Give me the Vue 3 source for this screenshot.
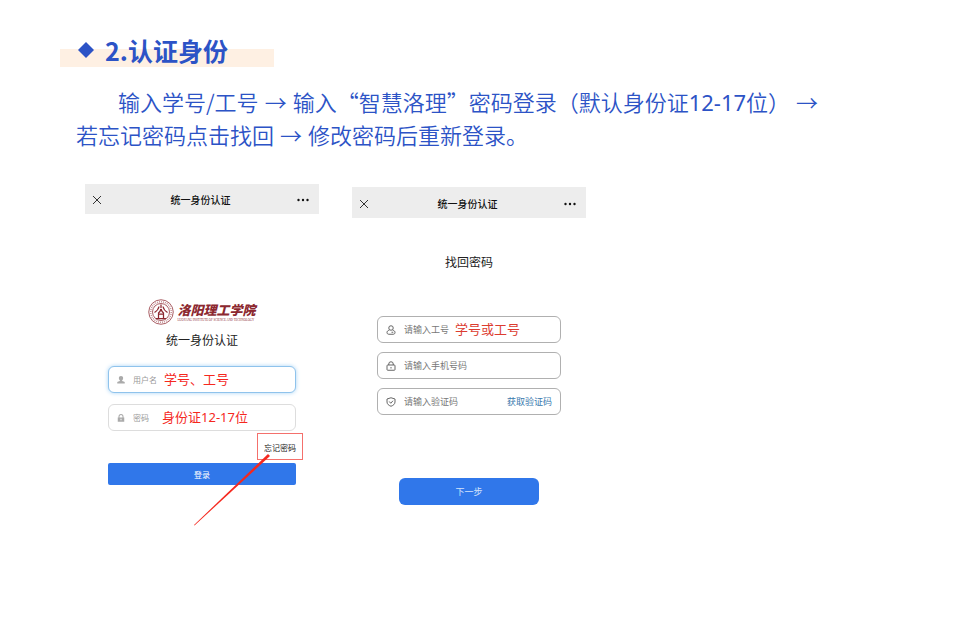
<template>
  <main class="guide" lang="zh-CN">
    <h1 class="title">
      <svg class="diamond" viewBox="0 0 16 16" aria-hidden="true"><path d="M8 0l8 8-8 8-8-8z" /></svg>
      <span>2.认证身份</span>
    </h1>

    <p class="intro">
      <span class="line first">输入学号/工号<i class="arrow">→</i>输入“智慧洛理”密码登录（默认身份证<span class="num">12-17</span>位）<i class="arrow">→</i></span>
      <span class="line">若忘记密码点击找回<i class="arrow">→</i>修改密码后重新登录。</span>
    </p>

    <div class="phones">
      <section class="phone">
        <header class="bar">
          <button class="bar-btn" type="button" aria-label="关闭">
            <svg class="close" viewBox="0 0 10 10"><path d="M1 1l8 8M9 1L1 9" /></svg>
          </button>
          <h2 class="bar-title">统一身份认证</h2>
          <button class="bar-btn" type="button" aria-label="更多">
            <svg class="more" viewBox="0 0 12 4"><circle cx="1.5" cy="2" r="1.2" /><circle cx="6" cy="2" r="1.2" /><circle cx="10.5" cy="2" r="1.2" /></svg>
          </button>
        </header>

        <form class="login" @submit.prevent>
          <div class="brand">
            <svg class="seal" viewBox="0 0 52 52" aria-hidden="true">
              <circle cx="26" cy="26" r="24.5" />
              <circle class="ring" cx="26" cy="26" r="20.5" />
              <circle cx="26" cy="26" r="17" />
              <path class="mark" d="M26 11v7M22 15c-1 5-4 9-9 12M30 15c1 5 4 9 9 12M26 20c-1 4-3 7-6 9M26 20c1 4 3 7 6 9M20 30h12M21 30v9M31 30v9M16 39h20" />
            </svg>
            <div class="brand-text">
              <span class="brand-cn">洛阳理工学院</span>
              <span class="brand-en">LUOYANG INSTITUTE OF SCIENCE AND TECHNOLOGY</span>
            </div>
          </div>
          <h3 class="login-title">统一身份认证</h3>

          <label class="field active">
            <svg class="icon solid" viewBox="0 0 16 16"><path d="M8 0c2.700 0 4.300 1.900 4.300 4.300 0 1.900-.8 3.200-2 4.100v1.600l4.200 1.500c.7.300 1 .8 1 1.500V15H.5v-2c0-.7.3-1.200 1-1.500l4.200-1.500V8.400c-1.200-.9-2-2.200-2-4.100C3.700 1.900 5.300 0 8 0z" /></svg>
            <input v-model="user" type="text" placeholder="用户名" aria-label="用户名">
            <span class="note user-note">学号、工号</span>
          </label>
          <label class="field">
            <svg class="icon solid" viewBox="0 0 16 16"><path fill-rule="evenodd" d="M3 7V5a5 5 0 0 1 10 0v2h1.500v8.500h-13V7zM5 7h6V5a3 3 0 0 0-6 0zM7 9.500v3h2v-3z" /></svg>
            <input v-model="password" type="password" placeholder="密码" aria-label="密码">
            <span class="note pass-note">身份证<span class="num">12-17</span>位</span>
          </label>

          <a class="forgot" href="#">忘记密码
            <svg class="pointer" viewBox="0 0 76 72" aria-hidden="true"><path d="M0 71L74 0l2 2L.5 71.500z" /></svg>
          </a>
          <button class="submit" type="submit">登录</button>
        </form>
      </section>

      <section class="phone second">
        <header class="bar">
          <button class="bar-btn" type="button" aria-label="关闭">
            <svg class="close" viewBox="0 0 10 10"><path d="M1 1l8 8M9 1L1 9" /></svg>
          </button>
          <h2 class="bar-title">统一身份认证</h2>
          <button class="bar-btn" type="button" aria-label="更多">
            <svg class="more" viewBox="0 0 12 4"><circle cx="1.5" cy="2" r="1.2" /><circle cx="6" cy="2" r="1.2" /><circle cx="10.5" cy="2" r="1.2" /></svg>
          </button>
        </header>

        <form class="recover" @submit.prevent>
          <h3 class="recover-title">找回密码</h3>
          <label class="field">
            <svg class="icon" viewBox="0 0 20 20"><circle cx="10" cy="6" r="4.500" /><path d="M6.500 10.500C3.500 11 2 12.700 2 15c0 2.200 1.500 3.500 3.500 3.500h9c2 0 3.500-1.300 3.500-3.500 0-2.300-1.500-4-4.500-4.500M11 14.500h3.500" /></svg>
            <input v-model="staffId" type="text" placeholder="请输入工号" aria-label="工号">
            <span class="note id-note">学号或工号</span>
          </label>
          <label class="field">
            <svg class="icon" viewBox="0 0 20 20"><rect x="2" y="8" width="16" height="10.500" rx="1.500" /><path d="M5.500 8V6a4.500 4.500 0 0 1 9 0v2M10 12v3" /></svg>
            <input v-model="phone" type="tel" placeholder="请输入手机号码" aria-label="手机号码">
          </label>
          <div class="field">
            <svg class="icon" viewBox="0 0 20 20"><path d="M10 1.500l8 2.500v6c0 4-3.500 7-8 8.500C5.500 17 2 14 2 10V4zM6.500 9l3 3.500L14 7.500" /></svg>
            <input v-model="code" type="text" placeholder="请输入验证码" aria-label="验证码">
            <button class="get-code" type="button">获取验证码</button>
          </div>
          <button class="next" type="submit">下一步</button>
        </form>
      </section>
    </div>
  </main>
</template>

<script setup>
import { ref } from 'vue'

const user = ref('')
const password = ref('')
const staffId = ref('')
const phone = ref('')
const code = ref('')
</script>

<style>
body{ background:#fff }
</style>

<style scoped>
*{ box-sizing:border-box }
.guide{ --blue:#2c53c6; --red:#f5281e; padding:35px 60px 40px; font-family:"Noto Sans CJK SC", sans-serif; color:#222 }
h1, h2, h3, p{ margin:0 }
button, input{ font-family:inherit; padding:0; border:0; background:none }
button{ cursor:pointer }
svg{ display:block; flex:none }
.num{ font-family:"Noto Sans", sans-serif }

.title{ display:flex; align-items:flex-start; gap:11px; width:fit-content; padding:0 46px 2px 18px; font-size:25px; line-height:30px; font-weight:700; color:var(--blue); background:linear-gradient(transparent 14px, #fef0e3 14px) }
.diamond{ width:16px; height:16px; margin-top:7px; fill:var(--blue) }

.intro{ margin-top:18px; padding-left:16px; font-size:22px; line-height:33px; font-weight:350; color:var(--blue) }
.line{ display:block }
.first{ padding-left:42px }
.intro .num{ font-weight:400; line-height:24px }
.arrow{ font-style:normal; margin:0 6px }

.phones{ display:flex; gap:33px; align-items:flex-start; margin-top:33px; padding-left:25px }
.phone{ flex:0 1 234px }
.second{ margin-top:3px }
.bar{ display:flex; align-items:center; justify-content:space-between; height:30px; padding:2px 10px 0 7px; background:#ededed }
.second .bar{ height:31px; padding-top:3px }
.bar-title{ font-size:10px; line-height:16px; font-weight:500; color:#111 }
.close{ width:10px; height:10px; fill:none; stroke:#333; stroke-width:1 }
.bar-btn:first-child .close{ margin-right:2px }
.more{ width:12px; height:4px; fill:#111 }

.login{ padding:85px 23px 0; display:flex; flex-direction:column }
.brand{ display:flex; align-items:center; align-self:center; gap:3px }
.seal{ width:26px; height:26px; fill:none; stroke:#8c2830; stroke-width:1.500 }
.seal .ring{ stroke-width:3; stroke-dasharray:2 2; opacity:.5 }
.seal .mark{ stroke-width:2.500 }
.brand-text{ display:flex; flex-direction:column; color:#8c2830; white-space:nowrap }
.brand-cn{ font-size:13px; line-height:16px; font-weight:900; font-style:italic }
.brand-en{ font-family:"Liberation Serif", serif; font-size:3px; line-height:4px }
.login-title{ margin-top:6px; text-align:center; font-size:12px; line-height:18px; font-weight:400 }

.field{ position:relative; display:flex; align-items:center; height:27px; border:1px solid #ddd; border-radius:6px; background:#fff }
.field input{ flex:1; min-width:0; height:20px; font-size:9px; color:#333; outline:none }
.field input::placeholder{ color:#777; opacity:1 }
.icon{ width:10px; height:10px; fill:none; stroke:#555; stroke-width:1.800 }
.icon.solid{ width:8px; height:8px; fill:#aaa; stroke:none }
.login .field{ margin-top:11px; padding:0 8px; gap:8px }
.login .field.active{ margin-top:17px; border-color:#8fc3ec; box-shadow:0 0 4px #a9d4f5 }
.login .field input{ font-size:8px }
.login .field input::placeholder{ color:#999 }
.note{ position:absolute; top:2px; font-size:13px; line-height:20px; color:var(--red); pointer-events:none; white-space:nowrap }
.user-note{ left:55px }
.pass-note{ left:53px }

.forgot{ position:relative; align-self:flex-end; margin:2px -7px 3px 0; width:46px; height:27px; border:1px solid #f4706c; font-size:8px; line-height:28px; text-align:center; color:#222; text-decoration:none; white-space:nowrap }
.pointer{ position:absolute; right:32px; top:20px; width:76px; height:72px; fill:var(--red) }
.submit{ height:22px; border-radius:2px; background:#3077ea; color:#fff; font-size:8px }

.recover{ padding:35px 25px 0; display:flex; flex-direction:column; gap:9px }
.recover-title{ margin-bottom:36px; text-align:center; font-size:12px; line-height:18px; font-weight:400 }
.recover .field{ padding:0 8px; gap:8px; border-color:#b0b0b0 }
.id-note{ left:77px; color:#dc3c30 }
.get-code{ font-size:9px; color:#3979ae }
.next{ align-self:center; width:140px; height:27px; margin-top:54px; border-radius:6px; background:#3077ea; color:#d3e3fb; font-size:9px }
</style>
